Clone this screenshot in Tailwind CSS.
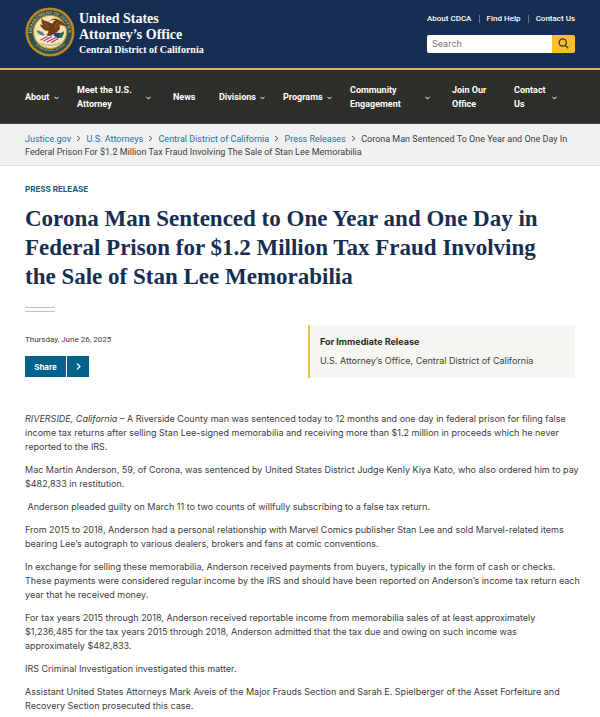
<!DOCTYPE html>
<html lang="en">
<head>
    <meta charset="UTF-8">
    <meta name="viewport" content="width=device-width, initial-scale=1.0">
    <title>Central District of California | Press Release</title>
    <script src="https://cdn.jsdelivr.net/npm/@tailwindcss/browser@4"></script>
</head>
<body class="bg-white font-['Inter',sans-serif] text-[9px] leading-[14px] text-[#3d3d3d]">
    <header class="flex items-center justify-between h-[70px] px-[25px] bg-[#162e51] border-b-2 border-[#e0b05c] text-white">
        <a href="#" class="flex items-center gap-1">
            <!-- Department seal -->
            <svg class="w-[50px] h-[50px] mb-1 shrink-0" viewBox="0 0 100 100" aria-hidden="true">
                <defs>
                    <path id="sealTop" d="M14 57a36.5 36.5 0 1 1 72 0"/>
                    <path id="sealBottom" d="M14 66a40 40 0 0 0 72 0"/>
                </defs>
                <circle cx="50" cy="50" r="49" fill="#b57c18"/>
                <circle cx="50" cy="50" r="46.5" fill="none" stroke="#e0ac35" stroke-width="2" stroke-dasharray="2 1.5"/>
                <circle cx="50" cy="50" r="44" fill="#28515a"/>
                <g fill="#d6b552" font-family="Liberation Serif, serif" font-weight="bold">
                    <text font-size="9"><textPath href="#sealTop" startOffset="50%" text-anchor="middle">DEPARTMENT OF JUSTICE</textPath></text>
                    <text font-size="5"><textPath href="#sealBottom" startOffset="50%" text-anchor="middle">QUI PRO DOMINA JUSTITIA</textPath></text>
                </g>
                <circle cx="50" cy="50" r="33" fill="#f0e3b4" stroke="#c6932d" stroke-width="2.5"/>
                <path d="M24 59l17-9 4 9-15 7z" fill="#eee"/>
                <path d="M30 66l31-14 12 6-6 9-18 5z" fill="#f3f0ec"/>
                <path d="M31 66l14-7M37 68l17-9M44 70l18-9M52 71l15-8" stroke="#bd3546" stroke-width="2.5"/>
                <path d="M58 51l14 1 3 9-10 1-8-5z" fill="#273f82"/>
                <path d="M23 48c4-4 6 0 9 1 4 1 5 5 8 7-6 3-14-1-17-8z" fill="#638671"/>
                <path d="M68 55c4-5 8-4 10-7 0 8-3 13-9 14z" fill="#2b684d"/>
                <path d="M34 24c5 4 9 5 15 6 3-6 10-9 17-5 9 4 15 9 17 16-5-4-9-5-14-4 3 7-3 13-10 15-4 5-10 8-16 4 2-3 4-5 4-8-8 0-14-6-17-13l6 1c-3-4-4-9-2-17z" fill="#713b13"/>
                <path d="M48 31c4-5 8-6 13-4-4 1-5 3-6 6z" fill="#f5edcf"/>
                <path d="M38 30l10 9M37 36l10 7M67 30l-9 9M72 34l-12 8" stroke="#a8692e" stroke-width="1.5" fill="none"/>
                <path d="M31 73c10 5 27 5 39-1" stroke="#8a8b72" stroke-width="2" stroke-dasharray="2 1" fill="none"/>
            </svg>
            <span class="flex flex-col font-['Liberation_Serif',serif] font-bold whitespace-nowrap">
                <span class="text-[14px] leading-[16px]">United States<br>Attorney’s Office</span>
                <span class="text-[10px] leading-[14px]">Central District of California</span>
            </span>
        </a>
        <div class="flex flex-col gap-[9px] w-[148px] mb-1">
            <nav class="flex items-center justify-between font-['Roboto',sans-serif] font-medium text-[8px] whitespace-nowrap" aria-label="Secondary">
                <a href="#">About CDCA</a>
                <span class="w-px h-2 bg-[#5f7391]"></span>
                <a href="#">Find Help</a>
                <span class="w-px h-2 bg-[#5f7391]"></span>
                <a href="#">Contact Us</a>
            </nav>
            <form class="flex h-[18px]" onsubmit="return false">
                <input type="search" aria-label="Search" placeholder="Search" class="flex-1 min-w-0 px-[5px] rounded-l-xs bg-white text-[9px] text-[#3d3d3d] placeholder:text-[#757575]">
                <button type="submit" aria-label="Submit search" class="flex items-center justify-center w-[23px] rounded-r-xs bg-[#ffbe2e]">
                    <svg class="w-[11px] h-[11px]" viewBox="0 0 11 11" fill="none" stroke="#3b3424" stroke-width="1.3"><circle cx="4.7" cy="4.5" r="3.6"/><path d="M7.2 7.2l3 3"/></svg>
                </button>
            </form>
        </div>
    </header>

    <nav class="h-[54px] px-[25px] grid grid-cols-[52fr_96fr_46fr_64fr_67fr_102fr_62fr_61fr] items-center bg-[#2e2e2a] border-b border-[#4a4a46] text-white font-['Roboto',sans-serif] font-bold" aria-label="Main">
        <button class="flex items-center justify-between pr-[18px] text-left whitespace-nowrap">About
            <svg class="w-[5px] h-[4px] mt-[3px] shrink-0" viewBox="0 0 5 4" fill="none" stroke="currentColor"><path d="M.5 .8l2 2.2 2-2.2"/></svg>
        </button>
        <button class="flex items-center justify-between pr-[22px] text-left whitespace-nowrap"><span>Meet the U.S.<br>Attorney</span>
            <svg class="w-[5px] h-[4px] mt-[3px] shrink-0" viewBox="0 0 5 4" fill="none" stroke="currentColor"><path d="M.5 .8l2 2.2 2-2.2"/></svg>
        </button>
        <a href="#">News</a>
        <button class="flex items-center justify-between pr-[18px] text-left whitespace-nowrap">Divisions
            <svg class="w-[5px] h-[4px] mt-[3px] shrink-0" viewBox="0 0 5 4" fill="none" stroke="currentColor"><path d="M.5 .8l2 2.2 2-2.2"/></svg>
        </button>
        <button class="flex items-center justify-between pr-[18px] text-left whitespace-nowrap">Programs
            <svg class="w-[5px] h-[4px] mt-[3px] shrink-0" viewBox="0 0 5 4" fill="none" stroke="currentColor"><path d="M.5 .8l2 2.2 2-2.2"/></svg>
        </button>
        <button class="flex items-center justify-between pr-[22px] text-left whitespace-nowrap"><span>Community<br>Engagement</span>
            <svg class="w-[5px] h-[4px] mt-[3px] shrink-0" viewBox="0 0 5 4" fill="none" stroke="currentColor"><path d="M.5 .8l2 2.2 2-2.2"/></svg>
        </button>
        <a href="#">Join Our<br>Office</a>
        <button class="flex items-center justify-between pr-[18px] text-left whitespace-nowrap"><span>Contact<br>Us</span>
            <svg class="w-[5px] h-[4px] mt-[3px] shrink-0" viewBox="0 0 5 4" fill="none" stroke="currentColor"><path d="M.5 .8l2 2.2 2-2.2"/></svg>
        </button>
    </nav>

    <nav class="px-[25px] pt-[9px] pb-[6px] bg-[#f0f0f0] border-b border-[#dfe1e2] font-['Roboto',sans-serif] leading-[13px]" aria-label="Breadcrumb">
        <a href="#" class="text-[#27709c]">Justice.gov</a>
        <svg class="inline w-[5px] h-[7px] mx-[3px] align-baseline" viewBox="0 0 5 7" fill="none" stroke="#555"><path d="M1 1l3 2.5L1 6"/></svg>
        <a href="#" class="text-[#27709c]">U.S. Attorneys</a>
        <svg class="inline w-[5px] h-[7px] mx-[3px] align-baseline" viewBox="0 0 5 7" fill="none" stroke="#555"><path d="M1 1l3 2.5L1 6"/></svg>
        <a href="#" class="text-[#27709c]">Central District of California</a>
        <svg class="inline w-[5px] h-[7px] mx-[3px] align-baseline" viewBox="0 0 5 7" fill="none" stroke="#555"><path d="M1 1l3 2.5L1 6"/></svg>
        <a href="#" class="text-[#27709c]">Press Releases</a>
        <svg class="inline w-[5px] h-[7px] mx-[3px] align-baseline" viewBox="0 0 5 7" fill="none" stroke="#555"><path d="M1 1l3 2.5L1 6"/></svg>
        Corona Man Sentenced To One Year and One Day In Federal Prison For $1.2 Million Tax Fraud Involving The Sale of Stan Lee Memorabilia
    </nav>

    <main class="pl-[25px] pr-5 pt-4 pb-1">
        <p class="font-bold text-[8px] text-[#10617f]">PRESS RELEASE</p>
        <h1 class="mt-2 pr-5 font-['Liberation_Serif',serif] font-bold text-[23px] leading-[29px] text-[#162e51]">Corona Man Sentenced to One Year and One Day in Federal Prison for $1.2 Million Tax Fraud Involving the Sale of Stan Lee Memorabilia</h1>
        <div class="mt-4 w-[30px] flex flex-col gap-[3px]">
            <span class="h-px bg-[#e8c04c]"></span>
            <span class="h-px bg-[#e8c04c]"></span>
        </div>

        <div class="mt-[13px] mr-[5px] flex items-start justify-between">
            <div class="pt-2">
                <time datetime="2025-06-26" class="block font-['Roboto',sans-serif] text-[8px]">Thursday, June 26, 2025</time>
                <button class="mt-[9px] flex h-[21px] bg-[#00638b] text-white font-bold text-[8px]">
                    <span class="flex items-center justify-center w-[42px] h-full border-r border-white">Share</span>
                    <span class="flex items-center justify-center w-[22px] h-full">
                        <svg class="w-[5px] h-[7px]" viewBox="0 0 5 7" fill="none" stroke="currentColor" stroke-width="1.2"><path d="M1 .5l3 3-3 3"/></svg>
                    </span>
                </button>
            </div>
            <aside class="w-[267px] h-[53px] pl-[10px] pt-[10px] bg-[#f5f6f1] border-l-2 border-[#e8c04c]">
                <p class="font-bold text-[#2b2b2b]">For Immediate Release</p>
                <p class="mt-[5px]">U.S. Attorney’s Office, Central District of California</p>
            </aside>
        </div>

        <article class="mt-[34px] flex flex-col gap-[9px]">
            <p><em>RIVERSIDE, California</em> – A Riverside County man was sentenced today to 12 months and one day in federal prison for filing false income tax returns after selling Stan Lee-signed memorabilia and receiving more than $1.2 million in proceeds which he never reported to the IRS.</p>
            <p>Mac Martin Anderson, 59, of Corona, was sentenced by United States District Judge Kenly Kiya Kato, who also ordered him to pay $482,833 in restitution.</p>
            <p>&nbsp;Anderson pleaded guilty on March 11 to two counts of willfully subscribing to a false tax return.</p>
            <p>From 2015 to 2018, Anderson had a personal relationship with Marvel Comics publisher Stan Lee and sold Marvel-related items bearing Lee’s autograph to various dealers, brokers and fans at comic conventions.</p>
            <p>In exchange for selling these memorabilia, Anderson received payments from buyers, typically in the form of cash or checks. These payments were considered regular income by the IRS and should have been reported on Anderson’s income tax return each year that he received money.</p>
            <p class="pr-5">For tax years 2015 through 2018, Anderson received reportable income from memorabilia sales of at least approximately $1,236,485 for the tax years 2015 through 2018, Anderson admitted that the tax due and owing on such income was approximately $482,833.</p>
            <p>IRS Criminal Investigation investigated this matter.</p>
            <p>Assistant United States Attorneys Mark Aveis of the Major Frauds Section and Sarah E. Spielberger of the Asset Forfeiture and Recovery Section prosecuted this case.</p>
        </article>
    </main>
</body>
</html>
